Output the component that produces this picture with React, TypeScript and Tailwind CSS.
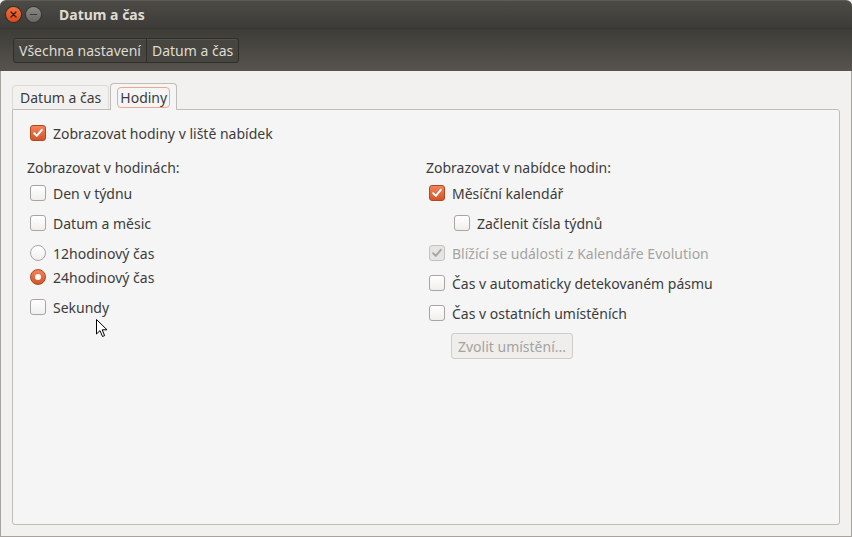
import React from 'react';

const font = { fontFamily: '"Noto Sans", "DejaVu Sans", sans-serif' };

function Check({ checked = false, disabled = false }: { checked?: boolean; disabled?: boolean }) {
  if (checked && !disabled) {
    return (
      <span className="flex h-4 w-4 shrink-0 items-center justify-center rounded-[3px] border border-[#b0481c] bg-gradient-to-b from-[#f2845a] to-[#d2552a]">
        <svg width="12" height="12" viewBox="0 0 12 12">
          <path d="M2.2 6.3 L4.8 8.9 L9.8 2.8" fill="none" stroke="#fff" strokeWidth="2" strokeLinecap="round" strokeLinejoin="round" />
        </svg>
      </span>
    );
  }
  if (checked && disabled) {
    return (
      <span className="flex h-4 w-4 shrink-0 items-center justify-center rounded-[3px] border border-[#c4c2bf] bg-[#e6e5e3]">
        <svg width="12" height="12" viewBox="0 0 12 12">
          <path d="M2.2 6.3 L4.8 8.9 L9.8 2.8" fill="none" stroke="#a9a7a4" strokeWidth="2" strokeLinecap="round" strokeLinejoin="round" />
        </svg>
      </span>
    );
  }
  return <span className="h-4 w-4 shrink-0 rounded-[3px] border border-[#a9a6a1] bg-gradient-to-b from-[#ffffff] to-[#f0efee]" />;
}

function Radio({ checked = false }: { checked?: boolean }) {
  if (checked) {
    return (
      <span className="flex h-4 w-4 shrink-0 items-center justify-center rounded-full border border-[#b0481c] bg-gradient-to-b from-[#f2845a] to-[#d2552a]">
        <span className="h-[6px] w-[6px] rounded-full bg-white" />
      </span>
    );
  }
  return <span className="h-4 w-4 shrink-0 rounded-full border border-[#a9a6a1] bg-gradient-to-b from-[#ffffff] to-[#f0efee]" />;
}

function Row({ children, label, disabled = false, className = '' }: { children: React.ReactNode; label: string; disabled?: boolean; className?: string }) {
  return (
    <div className={'flex h-[24px] items-center gap-[7px] ' + className}>
      {children}
      <span className={disabled ? 'text-[#a5a39f]' : 'text-[#3c3c3c]'}>{label}</span>
    </div>
  );
}

export default function App() {
  return (
    <div className="flex h-[537px] w-[852px] flex-col overflow-hidden bg-[#f2f1f0] text-[14px]" style={font}>
      {/* title bar */}
      <div className="flex h-[28px] items-center rounded-t-[6px] border-t border-[#5d5b56] bg-gradient-to-b from-[#4d4b46] to-[#3c3b37] pl-[6px]">
        <div className="flex h-[15px] w-[15px] items-center justify-center rounded-full bg-gradient-to-b from-[#f4703a] to-[#dc4a18] shadow-[0_0_0_1px_#3a2a22]">
          <svg width="7" height="7" viewBox="0 0 7 7">
            <path d="M1 1 L6 6 M6 1 L1 6" stroke="#3a1c10" strokeWidth="1.4" strokeLinecap="round" />
          </svg>
        </div>
        <div className="ml-[5px] flex h-[15px] w-[15px] items-center justify-center rounded-full bg-gradient-to-b from-[#8a8883] to-[#6a6864] shadow-[0_0_0_1px_#34332f]">
          <span className="h-[1.5px] w-[7px] bg-[#3b3a36]" />
        </div>
        <span className="ml-[18px] text-[14px] font-bold text-[#dfdbd2]">Datum a čas</span>
      </div>

      {/* toolbar */}
      <div className="flex h-[43px] items-center border-t border-[#37362f] bg-gradient-to-b from-[#3d3c37] to-[#57544f] pl-[13px]">
        <div className="flex h-[25px] items-stretch rounded-[3px] border border-[#2f2e2a] bg-[#464540] text-[#dfdbd2] shadow-[inset_0_1px_0_#55534e]">
          <span className="flex items-center border-r border-[#2f2e2a] px-[5px]">Všechna nastavení</span>
          <span className="flex items-center px-[5px]">Datum a čas</span>
        </div>
      </div>

      {/* content */}
      <div className="flex flex-1 flex-col border-x border-b border-[#a7a49f] px-[11px] pb-[11px] pt-[11px]">
        <div className="flex h-[27px] items-end">
          <div className="flex h-[24px] items-center rounded-t-[4px] border border-b-0 border-[#dcdad6] px-[7px] text-[#3c3c3c]">Datum a čas</div>
          <div className="relative top-[1px] z-10 ml-[1px] flex h-[27px] items-center rounded-t-[4px] border border-b-0 border-[#c0bdb8] bg-[#f5f5f5] px-[6px]">
            <span className="rounded-[4px] border border-[#f0a888] px-[2px] leading-[19px] text-[#3c3c3c]">Hodiny</span>
          </div>
        </div>
        <div className="flex flex-1 flex-col rounded-b-[3px] rounded-tr-[3px] border border-[#c0bdb8] bg-[#f5f5f5] pl-[17px] pt-[11px]">
          <Row label="Zobrazovat hodiny v liště nabídek">
            <Check checked />
          </Row>
          <div className="mt-[10px] flex">
            <div className="w-[399px]">
              <div className="flex h-[24px] items-center text-[#3c3c3c]">
                <span className="-ml-[3px]">Zobrazovat v hodinách:</span>
              </div>
              <Row label="Den v týdnu" className="mt-[2px]">
                <Check />
              </Row>
              <Row label="Datum a měsic" className="mt-[6px]">
                <Check />
              </Row>
              <Row label="12hodinový čas" className="mt-[6px]">
                <Radio />
              </Row>
              <Row label="24hodinový čas">
                <Radio checked />
              </Row>
              <Row label="Sekundy" className="mt-[6px]">
                <Check />
              </Row>
            </div>
            <div className="flex-1">
              <div className="flex h-[24px] items-center text-[#3c3c3c]">
                <span className="-ml-[3px]">Zobrazovat v nabídce hodin:</span>
              </div>
              <Row label="Měsíční kalendář" className="mt-[2px]">
                <Check checked />
              </Row>
              <Row label="Začlenit čísla týdnů" className="mt-[6px] pl-[25px]">
                <Check />
              </Row>
              <Row label="Blížící se události z Kalendáře Evolution" disabled className="mt-[6px]">
                <Check checked disabled />
              </Row>
              <Row label="Čas v automaticky detekovaném pásmu" className="mt-[6px]">
                <Check />
              </Row>
              <Row label="Čas v ostatních umístěních" className="mt-[6px]">
                <Check />
              </Row>
              <div className="mt-[8px] pl-[22px]">
                <button className="h-[26px] rounded-[3px] border border-[#cfcdca] bg-[#efeeed] px-[6px] text-[#a5a39f]">Zvolit umístění...</button>
              </div>
            </div>
          </div>
        </div>
      </div>

      {/* mouse cursor */}
      <svg className="absolute left-[96px] top-[319px]" width="12" height="19" viewBox="0 0 12 19">
        <path d="M0.5 0.5 L0.5 15 L4 11.6 L6.5 17.5 L8.6 16.6 L6.2 10.8 L11 10.8 Z" fill="#fff" stroke="#000" strokeWidth="1" strokeLinejoin="round" />
      </svg>
    </div>
  );
}
